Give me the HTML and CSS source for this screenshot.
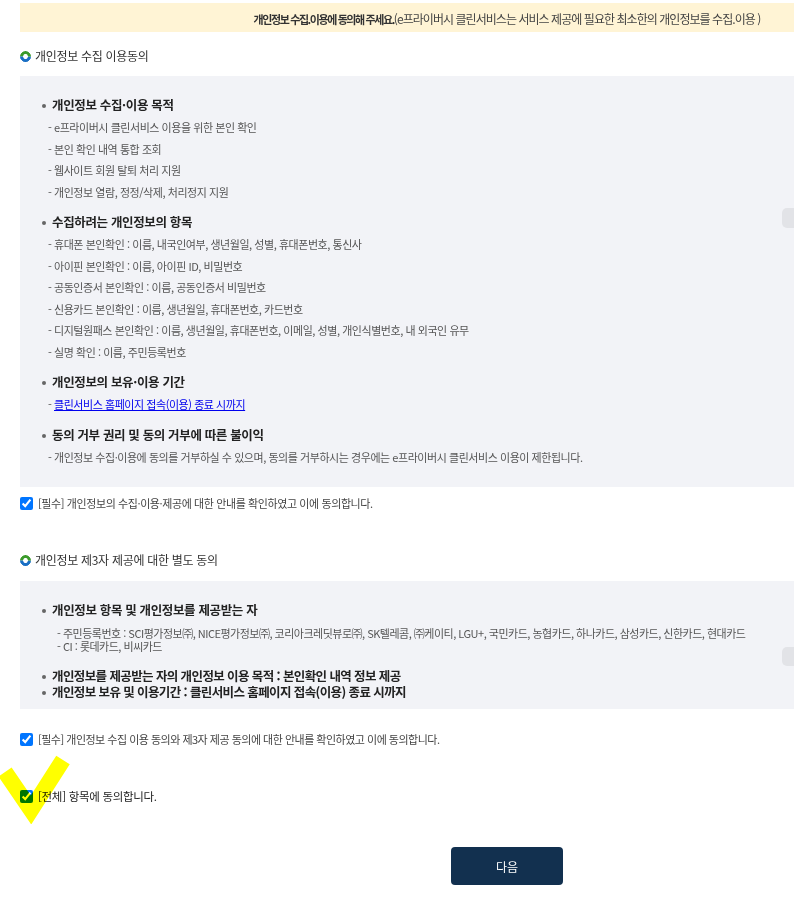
FILE: index.html
```html
<!DOCTYPE html>
<html lang="ko">
<head>
<meta charset="utf-8">
<title>개인정보 수집 이용동의</title>
<link rel="stylesheet" href="styles.css">
</head>
<body>
<div class="page">
  <div class="notice">
    <strong>개인정보 수집.이용에 동의해 주세요.</strong><span>(e프라이버시 클린서비스는 서비스 제공에 필요한 최소한의 개인정보를 수집.이용 )</span>
  </div>

  <h2 class="sec-title title-first"><span class="ring"></span>개인정보 수집 이용동의</h2>
  <div class="terms-box box-one">
    <div class="group">
      <p class="g-head">개인정보 수집·이용 목적</p>
      <p class="g-item">- e프라이버시 클린서비스 이용을 위한 본인 확인</p>
      <p class="g-item">- 본인 확인 내역 통합 조회</p>
      <p class="g-item">- 웹사이트 회원 탈퇴 처리 지원</p>
      <p class="g-item">- 개인정보 열람, 정정/삭제, 처리정지 지원</p>
    </div>
    <div class="group">
      <p class="g-head">수집하려는 개인정보의 항목</p>
      <p class="g-item">- 휴대폰 본인확인 : 이름, 내국인여부, 생년월일, 성별, 휴대폰번호, 통신사</p>
      <p class="g-item">- 아이핀 본인확인 : 이름, 아이핀 ID, 비밀번호</p>
      <p class="g-item">- 공동인증서 본인확인 : 이름, 공동인증서 비밀번호</p>
      <p class="g-item">- 신용카드 본인확인 : 이름, 생년월일, 휴대폰번호, 카드번호</p>
      <p class="g-item">- 디지털원패스 본인확인 : 이름, 생년월일, 휴대폰번호, 이메일, 성별, 개인식별번호, 내 외국인 유무</p>
      <p class="g-item">- 실명 확인 : 이름, 주민등록번호</p>
    </div>
    <div class="group">
      <p class="g-head">개인정보의 보유·이용 기간</p>
      <p class="g-item">- <a href="#" class="period-link">클린서비스 홈페이지 접속(이용) 종료 시까지</a></p>
    </div>
    <div class="group">
      <p class="g-head">동의 거부 권리 및 동의 거부에 따른 불이익</p>
      <p class="g-item">- 개인정보 수집·이용에 동의를 거부하실 수 있으며, 동의를 거부하시는 경우에는 e프라이버시 클린서비스 이용이 제한됩니다.</p>
    </div>
    <span class="scroll-thumb thumb-one"></span>
  </div>
  <label class="agree agree-one"><input type="checkbox" checked> <span>[필수] 개인정보의 수집·이용·제공에 대한 안내를 확인하였고 이에 동의합니다.</span></label>

  <h2 class="sec-title title-second"><span class="ring"></span>개인정보 제3자 제공에 대한 별도 동의</h2>
  <div class="terms-box box-two">
    <p class="g-head">개인정보 항목 및 개인정보를 제공받는 자</p>
    <div class="sub-list">
      <p>- 주민등록번호 : SCI평가정보㈜, NICE평가정보㈜, 코리아크레딧뷰로㈜, SK텔레콤, ㈜케이티, LGU+, 국민카드, 농협카드, 하나카드, 삼성카드, 신한카드, 현대카드</p>
      <p>- CI : 롯데카드, 비씨카드</p>
    </div>
    <div class="tight-heads">
      <p class="g-head">개인정보를 제공받는 자의 개인정보 이용 목적 : 본인확인 내역 정보 제공</p>
      <p class="g-head">개인정보 보유 및 이용기간 : 클린서비스 홈페이지 접속(이용) 종료 시까지</p>
    </div>
    <span class="scroll-thumb thumb-two"></span>
  </div>
  <label class="agree agree-two"><input type="checkbox" checked> <span>[필수] 개인정보 수집 이용 동의와 제3자 제공 동의에 대한 안내를 확인하였고 이에 동의합니다.</span></label>

  <label class="agree agree-all"><input type="checkbox" checked> <span>[전체] 항목에 동의합니다.</span></label>

  <div class="actions">
    <button type="button" class="next-btn">다음</button>
  </div>

  <svg class="highlight" width="76" height="72" viewBox="0 0 76 72" aria-hidden="true">
    <polyline points="5,20 31,58 63,8" fill="none" stroke="#ffff00" stroke-width="16" stroke-linejoin="miter"/>
  </svg>
</div>
</body>
</html>
```

FILE: styles.css
```css
html, body {
  margin: 0;
  padding: 0;
  overflow-x: hidden;
  background: #fff;
}

body {
  font-family: "Noto Sans CJK KR", "Noto Sans", sans-serif;
  color: #333;
}

.page {
  position: relative;
  width: 974px;
  padding-left: 20px;
  padding-top: 3px;
}

p { margin: 0; }

.notice {
  background: #fff4d5;
  height: 29px;
  line-height: 29px;
  text-align: center;
  white-space: nowrap;
  color: #444;
}
.notice strong {
  font-size: 11px;
  font-weight: 700;
  letter-spacing: -1.4px;
  color: #333;
}
.notice span {
  font-size: 12px;
  letter-spacing: -0.95px;
}

.sec-title {
  margin: 16px 0 12px;
  font-size: 12px;
  font-weight: 400;
  line-height: 16px;
  letter-spacing: -0.3px;
  color: #333;
  display: flex;
  align-items: center;
}
.title-second { margin-top: 41px; margin-bottom: 13px; }

.ring {
  width: 5px;
  height: 5px;
  border-radius: 50%;
  border: 3px solid #1a6fc4;
  border-top-color: #3a9a2a;
  border-right-color: #3a9a2a;
  transform: rotate(-45deg);
  margin-right: 4px;
  flex: none;
}

.terms-box {
  position: relative;
  background: #f2f3f7;
}
.box-one { padding: 17px 0 19px; }
.box-two { padding: 17px 0 9px; }

.group + .group { margin-top: 7px; }

.g-head {
  position: relative;
  padding-left: 32px;
  font-size: 12.5px;
  font-weight: 700;
  line-height: 24px;
  letter-spacing: -0.35px;
  color: #222;
  white-space: nowrap;
}
.g-head::before {
  content: "";
  position: absolute;
  left: 22px;
  top: 50%;
  width: 4px;
  height: 4px;
  margin-top: -1px;
  border-radius: 50%;
  background: #666;
}

.g-item {
  padding-left: 28px;
  font-size: 11px;
  line-height: 21.5px;
  letter-spacing: -0.45px;
  color: #555;
  white-space: nowrap;
}
.period-link {
  color: #0000ee;
  text-decoration: underline;
}

.sub-list {
  margin-top: 5px;
  padding-left: 37px;
  font-size: 11px;
  line-height: 13px;
  letter-spacing: -0.5px;
  color: #555;
  white-space: nowrap;
}
.tight-heads { margin-top: 15px; }
.tight-heads .g-head { line-height: 16px; letter-spacing: -0.6px; }

.scroll-thumb {
  position: absolute;
  left: 762px;
  width: 24px;
  height: 20px;
  border-radius: 5px;
  background: #e2e3e7;
}
.thumb-one { top: 132px; }
.thumb-two { top: 66px; height: 19px; }

.agree {
  display: flex;
  align-items: center;
  height: 16px;
  font-size: 11px;
  letter-spacing: -0.4px;
  color: #444;
  white-space: nowrap;
}
.agree input {
  width: 13px;
  height: 13px;
  margin: 0 5px 0 0;
  accent-color: #0075ff;
}
.agree-one { margin-top: 8px; }
.agree-two { margin-top: 22px; letter-spacing: -0.5px; }
.agree-all { margin-top: 41px; color: #222; font-size: 11.5px; letter-spacing: -0.3px; }

.actions {
  display: flex;
  justify-content: center;
  margin-top: 43px;
  padding-bottom: 20px;
}
.next-btn {
  width: 112px;
  height: 38px;
  border: 0;
  border-radius: 4px;
  background: #12304f;
  color: #fff;
  font-family: "Noto Sans CJK KR", sans-serif;
  font-size: 12px;
  letter-spacing: 0;
  cursor: pointer;
}

.highlight {
  position: absolute;
  left: 0;
  top: 752px;
  mix-blend-mode: multiply;
  pointer-events: none;
}
```
